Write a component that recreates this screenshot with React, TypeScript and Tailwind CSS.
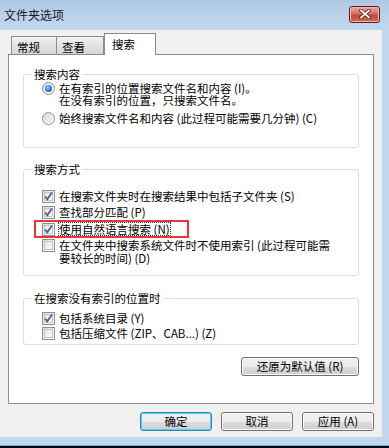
import React from "react";

// =======================
// SMALL CONTROLS
// =======================
function CheckBox({ checked }: { checked?: boolean }) {
  return (
    <span className="relative w-[13px] h-[13px] shrink-0 border border-[#8e8f8f] bg-[linear-gradient(135deg,#dcdcdc,#ffffff)] p-[1px]">
      <span className="block w-full h-full border border-[#c4c4c4] bg-[linear-gradient(135deg,#e6e6e6,#fbfbfb)]" />
      {checked && (
        <svg viewBox="0 0 13 13" className="absolute -left-px -top-px w-[13px] h-[13px]">
          <path d="M3 6.5 L5.3 9.2 L10 2.6" fill="none" stroke="#4a5d99" strokeWidth="1.8" />
        </svg>
      )}
    </span>
  );
}

function Radio({ checked }: { checked?: boolean }) {
  return (
    <span className="flex items-center justify-center w-[13px] h-[13px] shrink-0 rounded-full border border-[#8e8f8f] bg-[linear-gradient(135deg,#dcdcdc,#ffffff)]">
      {checked ? (
        <span className="w-[7px] h-[7px] rounded-full bg-[radial-gradient(circle_at_40%_35%,#8fd0ff,#1c6fd0_60%,#0b4ca6)]" />
      ) : (
        <span className="w-[9px] h-[9px] rounded-full bg-[linear-gradient(135deg,#d6d6d6,#f6f6f6)]" />
      )}
    </span>
  );
}

function Button({ label, primary, width = "w-[72px]" }: { label: string; primary?: boolean; width?: string }) {
  return (
    <div
      className={`${width} h-[19px] rounded-[3px] border ${
        primary ? "border-[#3c7fb1] shadow-[inset_0_0_0_1px_#48d3fb]" : "border-[#707070] shadow-[inset_0_0_0_1px_#fcfcfc]"
      } bg-[linear-gradient(#f2f2f2_0%,#ebebeb_50%,#dddddd_51%,#cfcfcf_100%)] flex items-center justify-center text-[11.5px] leading-none text-black`}
    >
      {label}
    </div>
  );
}

function Group({ title, className, children }: { title: string; className?: string; children: React.ReactNode }) {
  return (
    <fieldset className={`border border-[#d5dfe5] rounded-[3px] px-[19px] ${className ?? ""}`}>
      <legend className="px-[2px] -ml-[11px] text-[11.5px] leading-[12px] text-black">{title}</legend>
      {children}
    </fieldset>
  );
}

function Row({ children, className }: { children: React.ReactNode; className?: string }) {
  return <div className={`flex items-start gap-[4px] ${className ?? ""}`}>{children}</div>;
}

// =======================
// MAIN
// =======================
export default function App() {
  return (
    <div
      className="w-[389px] h-[448px] flex flex-col overflow-hidden text-black"
      style={{ fontFamily: '"Noto Sans CJK SC", "Noto Sans", sans-serif' }}
    >
      {/* title bar */}
      <div className="h-[30px] shrink-0 flex items-center justify-between pl-[4px] pr-[9px] bg-[linear-gradient(#aec8e4,#bcd3ec_60%,#c2d7ee)]">
        <span className="text-[12px] leading-none text-[#1b1b1b] -mt-[1px]">文件夹选项</span>
        <div className="w-[31px] h-[17px] -mt-[2px] rounded-[3px] border border-[#5a1e1e] bg-[linear-gradient(#e9a99c,#d46f5f_45%,#c24a3a_55%,#d06a52)] flex items-center justify-center shadow-[inset_0_0_0_1px_#f2b9ad]">
          <svg viewBox="0 0 12 10" className="w-[12px] h-[10px]">
            <path d="M2 1.5 L10 8.5 M10 1.5 L2 8.5" stroke="#4a2020" strokeWidth="3.4" strokeLinecap="square" />
            <path d="M2 1.5 L10 8.5 M10 1.5 L2 8.5" stroke="#ffffff" strokeWidth="1.8" strokeLinecap="square" />
          </svg>
        </div>
      </div>

      <div className="flex flex-1">
        {/* body */}
        <div className="flex-1 bg-[#f0f0f0] pt-[3px] flex flex-col">
          {/* tabs */}
          <div className="flex items-end h-[21px] pl-[11px] text-[11.5px] leading-none">
            <div className="w-[46px] h-[18px] border border-b-0 border-[#898c95] bg-[linear-gradient(#f2f2f2,#e3e3e3_50%,#d6d6d6)] pl-[5px] pt-[5px]">常规</div>
            <div className="w-[47px] h-[18px] border border-b-0 border-l-0 border-[#898c95] bg-[linear-gradient(#f2f2f2,#e3e3e3_50%,#d6d6d6)] pl-[5px] pt-[5px]">查看</div>
            <div className="relative z-10 w-[52px] h-[22px] -mb-px border border-b-0 border-[#898c95] bg-white pl-[7px] pt-[5px]">搜索</div>
          </div>

          {/* panel */}
          <div className="ml-[8px] w-[366px] h-[350px] border border-[#898c95] bg-white pl-[14px] pt-[13px] text-[11.5px]">
            <div className="w-[336px] flex flex-col">
              <Group title="搜索内容" className="h-[80px]">
                <Row className="mt-[2px] ml-[-1px]">
                  <span className="pt-[0px]"><Radio checked /></span>
                  <div className="leading-[12px]">
                    <div>在有索引的位置搜索文件名和内容 (I)。</div>
                    <div>在没有索引的位置，只搜索文件名。</div>
                  </div>
                </Row>
                <Row className="mt-[6px] ml-[-1px]">
                  <Radio />
                  <span className="leading-[13px]">始终搜索文件名和内容 (此过程可能需要几分钟) (C)</span>
                </Row>
              </Group>

              <Group title="搜索方式" className="mt-[15px] h-[113px]">
                <div className="mt-[15px] flex flex-col gap-[3px] ml-[-1px]">
                  <Row>
                    <CheckBox checked />
                    <span className="leading-[13px]">在搜索文件夹时在搜索结果中包括子文件夹 (S)</span>
                  </Row>
                  <Row>
                    <CheckBox checked />
                    <span className="leading-[13px]">查找部分匹配 (P)</span>
                  </Row>
                  <div className="-ml-[8px] w-[155px] h-[18px] -my-[2px] border-[2.5px] border-[#e8363a] flex items-center pl-[6px]">
                    <Row>
                      <CheckBox checked />
                      <span className="leading-[12px] outline outline-1 outline-dotted outline-[#333]">使用自然语言搜索 (N)</span>
                    </Row>
                  </div>
                  <Row>
                    <CheckBox />
                    <span className="leading-[12.5px]">
                      在文件夹中搜索系统文件时不使用索引 (此过程可能需
                      <br />
                      要较长的时间) (D)
                    </span>
                  </Row>
                </div>
              </Group>

              <Group title="在搜索没有索引的位置时" className="mt-[16px] h-[53px]">
                <div className="mt-[8px] flex flex-col gap-[2px] ml-[-1px]">
                  <Row>
                    <CheckBox checked />
                    <span className="leading-[13px]">包括系统目录 (Y)</span>
                  </Row>
                  <Row>
                    <CheckBox />
                    <span className="leading-[13px]">包括压缩文件 (ZIP、CAB...) (Z)</span>
                  </Row>
                </div>
              </Group>

              <div className="flex justify-end mt-[12px]">
                <Button label="还原为默认值 (R)" width="w-[118px]" />
              </div>
            </div>
          </div>

          {/* bottom buttons */}
          <div className="flex justify-end gap-[9px] pr-[8px] mt-[8px]">
            <Button label="确定" primary />
            <Button label="取消" />
            <Button label="应用 (A)" />
          </div>
        </div>
        {/* right frame */}
        <div className="w-[7px] bg-[#c2d7ee]" />
      </div>

      {/* bottom frame */}
      <div className="h-[8px] shrink-0 bg-[#c2d7ee]" />
      <div className="h-[1px] shrink-0 bg-[#36c3ee]" />
      <div className="h-[2px] shrink-0 bg-black" />
    </div>
  );
}
